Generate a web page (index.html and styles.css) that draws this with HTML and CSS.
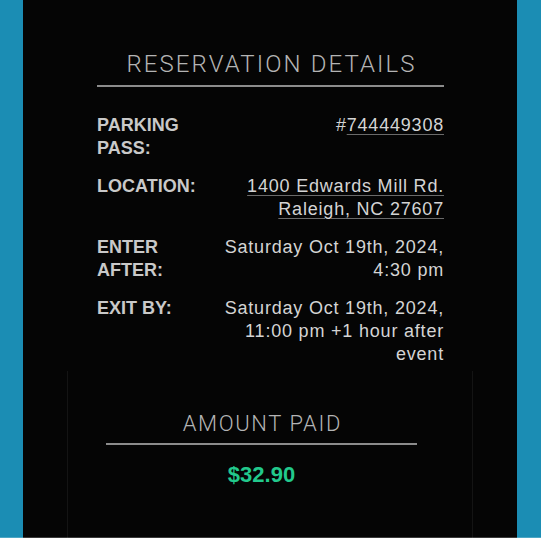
FILE: index.html
```html
<!DOCTYPE html>
<html lang="en">
<head>
<meta charset="utf-8">
<title>Reservation Details</title>
<link rel="stylesheet" href="styles.css">
</head>
<body>
<main class="panel">
  <section class="details">
    <h2 class="section-title">RESERVATION DETAILS</h2>
    <dl class="rows">
      <div class="row">
        <dt class="label">PARKING PASS:</dt>
        <dd class="value">#<a class="link">744449308</a></dd>
      </div>
      <div class="row">
        <dt class="label">LOCATION:</dt>
        <dd class="value"><a class="link">1400 Edwards Mill Rd. Raleigh, NC 27607</a></dd>
      </div>
      <div class="row">
        <dt class="label">ENTER AFTER:</dt>
        <dd class="value">Saturday Oct 19th, 2024, 4:30 pm</dd>
      </div>
      <div class="row">
        <dt class="label">EXIT BY:</dt>
        <dd class="value">Saturday Oct 19th, 2024, 11:00 pm +1 hour after event</dd>
      </div>
    </dl>
  </section>
  <section class="card">
    <div class="amount">
      <h2 class="section-title small">AMOUNT PAID</h2>
      <p class="price">$32.90</p>
    </div>
  </section>
</main>
</body>
</html>
```
FILE: styles.css
```css
html, body {
  margin: 0;
  padding: 0;
}
body {
  background: #1b8db4;
  min-height: 538px;
  font-family: "Liberation Sans", Arial, sans-serif;
  display: flex;
}
body::after {
  content: "";
  position: fixed;
  left: 0;
  right: 0;
  bottom: 0;
  height: 1px;
  background: rgba(255, 255, 255, 0.22);
}
.panel {
  margin: 0 24px 0 23px;
  flex: 1;
  background: #050505;
  display: flex;
  flex-direction: column;
  align-items: center;
  padding-top: 50px;
}
.details {
  width: 347px;
  margin-left: 1px;
}
.section-title {
  margin: 0;
  font-family: "Roboto", "Liberation Sans", sans-serif;
  font-weight: 300;
  font-size: 24px;
  line-height: 28px;
  letter-spacing: 2.1px;
  padding-left: 2.1px;
  color: #b4b4b4;
  text-align: center;
  padding-bottom: 7px;
  border-bottom: 2px solid #8c8c8c;
}
.section-title.small {
  font-size: 22px;
  line-height: 26px;
  letter-spacing: 1.6px;
  padding-left: 1.6px;
  padding-bottom: 6px;
}
.rows {
  margin: 27px 0 0;
  display: flex;
  flex-direction: column;
  gap: 15px;
}
.row {
  display: grid;
  grid-template-columns: 115px 1fr;
  font-size: 18px;
  line-height: 23px;
}
.label {
  margin: 0;
  font-weight: bold;
  color: #c9c9c9;
}
.value {
  margin: 0;
  text-align: right;
  color: #d4d4d4;
  letter-spacing: 0.8px;
}
.link {
  text-decoration: underline;
  text-decoration-color: #6a6a6a;
  text-decoration-thickness: 1px;
  text-underline-offset: 3px;
}
.card {
  margin-top: 5px;
  flex: 1;
  border-left: 1px solid #141414;
  border-right: 1px solid #141414;
  padding: 40px 55px 0 38px;
  box-sizing: border-box;
  width: 406px;
}
.price {
  margin: 17px 0 0;
  text-align: center;
  font-weight: bold;
  font-size: 22px;
  line-height: 26px;
  color: #22c98c;
}
```
